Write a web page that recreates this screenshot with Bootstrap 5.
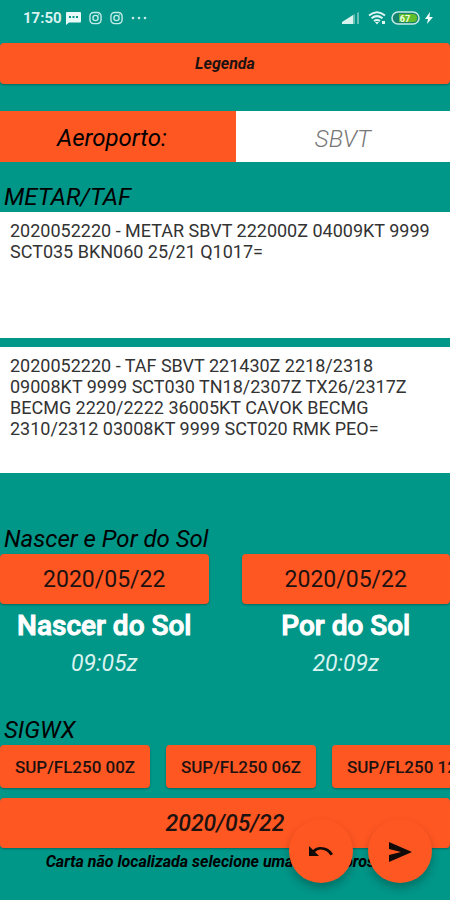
<!DOCTYPE html>
<html lang="pt-BR">
<head>
<meta charset="utf-8">
<meta name="viewport" content="width=device-width, initial-scale=1">
<title>Aeroporto SBVT</title>
<link href="https://cdn.jsdelivr.net/npm/bootstrap@5.3.0/dist/css/bootstrap.min.css" rel="stylesheet">
<style>
  body { font-family: Roboto, "Liberation Sans", sans-serif; background: #009688; color: #000; line-height: 24px; }
  .status-bar { height: 36px; padding-left: 23px; padding-right: 17px; color: #d9f3ef; font-size: 15px; }
  .btn-flame, .btn-flame:hover, .btn-flame:active { background: #ff5722; color: #1d1210; border: 0; border-radius: 4px; box-shadow: 0 1px 2px rgba(0, 0, 0, .3); }
  .legend-btn { height: 41px; margin-top: 7px; margin-bottom: 27px; font-size: 16px; }
  .airport-label { flex: 0 0 52.4%; padding-top: 2px; padding-right: 12px; background: #ff5722; font-size: 24px; }
  .airport-row { height: 51px; }
  .airport-input { padding: 4px 0 0; font-size: 24px; font-weight: 300; color: #777; }
  .section-title { font-size: 24px; line-height: 26px; padding-left: 4px; margin: 0; font-weight: 400; }
  .metar-title { margin-top: 22px; margin-bottom: 2px; }
  .sun-title { margin-top: 53px; margin-bottom: 2px; }
  .sigwx-title { margin-top: 37px; margin-bottom: 2px; }
  .report { display: block; height: 126px; padding: 8px 10px; resize: none; overflow: hidden; font-size: 18px; line-height: 21px; color: #333; font-weight: 400; }
  .report-gap { gap: 9px; }
  .sun-grid { column-gap: 33px; }
  .sun-col { flex: 1 1 0; }
  .date-btn { height: 50px; padding: 3px 0 0; font-size: 23px; }
  .sun-name { font-size: 28px; line-height: 32px; margin: 6px 0; color: #fff; -webkit-text-stroke: 1px #fff; }
  .sun-time { font-size: 23px; line-height: 32px; color: #d9f3ef; }
  .chart-list { gap: 16px; overflow-x: auto; scrollbar-width: none; padding-bottom: 10px; }
  .chart-list::-webkit-scrollbar { display: none; }
  .chart-btn { flex: 0 0 150px; height: 43px; padding: 2px 0 0; font-size: 17px; }
  .fab-group { right: 18px; bottom: 17px; gap: 15px; }
  .fab-btn, .fab-btn:hover { width: 64px; height: 64px; padding: 2px 0 0; border: 0; background: #ff5722; color: #100b09; box-shadow: 0 5px 8px rgba(0, 0, 0, .25); }
  .chart-note { font-size: 16px; line-height: 20px; margin: 4px 0 0; }
</style>
<script src="https://cdn.jsdelivr.net/npm/bootstrap@5.3.0/dist/js/bootstrap.bundle.min.js"></script>
</head>
<body>
<header class="status-bar d-flex align-items-center justify-content-between">
  <div class="d-flex align-items-center">
    <span class="fw-bold me-1">17:50</span>
    <svg width="15" height="13" viewBox="0 0 15 13" aria-hidden="true"><path fill="#e8faf7" d="M1 0h13q1 0 1 1v8.500q0 1-1 1H3L0 13V1q0-1 1-1z"/><path fill="#009688" d="M3 4h2v2H3zM6.500 4h2v2h-2zM10 4h2v2h-2z"/></svg>
    <svg class="ms-2" width="13" height="14" viewBox="0 0 14 14" fill="none" stroke="#c5ece7" stroke-width="1.500" aria-hidden="true"><rect x="1" y="1" width="12" height="12" rx="4"/><circle cx="7" cy="7" r="2.800"/><path d="M10 3.500h1"/></svg>
    <svg class="ms-2" width="13" height="14" viewBox="0 0 14 14" fill="none" stroke="#c5ece7" stroke-width="1.500" aria-hidden="true"><rect x="1" y="1" width="12" height="12" rx="4"/><circle cx="7" cy="7" r="2.800"/><path d="M10 3.500h1"/></svg>
    <svg class="ms-2" width="16" height="4" viewBox="0 0 16 4" fill="#c5ece7" aria-hidden="true"><circle cx="2" cy="2" r="1.300"/><circle cx="8" cy="2" r="1.300"/><circle cx="14" cy="2" r="1.300"/></svg>
  </div>
  <div class="d-flex align-items-center">
    <svg width="18" height="12" viewBox="0 0 18 12" aria-hidden="true"><path fill="#d9f3ef" d="M0 12V10l11-7v9z"/><path fill="#67bfb6" d="M11 12V3l2-1v10zM15 12V1l2-1v12z"/></svg>
    <svg class="ms-2" width="19" height="14" viewBox="0 0 19 14" aria-hidden="true"><g fill="none" stroke="#e0f6f3" stroke-width="2"><path d="M1 4.500Q9 -2 17 4.500M3.500 7.300Q9 3 14.500 7.300M6 10q3-2.200 6 0"/></g><path fill="#e0f6f3" d="M7 11h4l-2 2.500zM14 10h3v3h-3z"/></svg>
    <svg class="ms-1" width="30" height="14" viewBox="0 0 30 14" aria-hidden="true"><rect x="1" y="1" width="27" height="12" rx="6" fill="#16836f" stroke="#c5ece7" stroke-width="1.500"/><path fill="#62bd2c" d="M8 3h14q4 0 4 4t-4 4H8z"/><text x="14" y="10.500" text-anchor="middle" font-size="9" font-weight="700" fill="#f2ffe6">67</text></svg>
    <svg class="ms-1" width="8" height="12" viewBox="0 0 8 12" aria-hidden="true"><path fill="#f2fffd" d="M5 0L0 7h3L2 12 8 5H4.500z"/></svg>
  </div>
</header>

<main>
  <button type="button" class="btn btn-flame legend-btn w-100 fw-bold fst-italic">Legenda</button>

  <div class="airport-row d-flex">
    <label for="airport" class="airport-label d-flex align-items-center justify-content-center fst-italic">Aeroporto:</label>
    <input id="airport" type="text" value="SBVT" class="airport-input form-control flex-fill border-0 rounded-0 text-center fst-italic">
  </div>

  <h2 class="section-title metar-title fst-italic">METAR/TAF</h2>
  <div class="report-gap d-flex flex-column">
    <textarea aria-label="METAR" readonly class="report form-control border-0 rounded-0">2020052220 - METAR SBVT 222000Z 04009KT 9999 SCT035 BKN060 25/21 Q1017=</textarea>
    <textarea aria-label="TAF" readonly class="report form-control border-0 rounded-0">2020052220 - TAF SBVT 221430Z 2218/2318 09008KT 9999 SCT030 TN18/2307Z TX26/2317Z BECMG 2220/2222 36005KT CAVOK BECMG 2310/2312 03008KT 9999 SCT020 RMK PEO=</textarea>
  </div>

  <h2 class="section-title sun-title fst-italic">Nascer e Por do Sol</h2>
  <div class="sun-grid d-flex text-center">
    <section class="sun-col">
      <button type="button" class="btn btn-flame date-btn w-100">2020/05/22</button>
      <h3 class="sun-name">Nascer do Sol</h3>
      <div class="sun-time fst-italic">09:05z</div>
    </section>
    <section class="sun-col">
      <button type="button" class="btn btn-flame date-btn w-100">2020/05/22</button>
      <h3 class="sun-name">Por do Sol</h3>
      <div class="sun-time fst-italic">20:09z</div>
    </section>
  </div>

  <h2 class="section-title sigwx-title fst-italic">SIGWX</h2>
  <div class="chart-list d-flex">
    <button type="button" class="btn btn-flame chart-btn fw-medium">SUP/FL250 00Z</button>
    <button type="button" class="btn btn-flame chart-btn fw-medium">SUP/FL250 06Z</button>
    <button type="button" class="btn btn-flame chart-btn fw-medium">SUP/FL250 12Z</button>
  </div>
  <button type="button" class="btn btn-flame date-btn w-100 fw-medium fst-italic">2020/05/22</button>
  <p class="chart-note text-center fw-bold fst-italic">Carta não localizada selecione uma data e prossiga</p>
</main>

<div class="fab-group position-fixed d-flex">
  <button type="button" aria-label="Voltar" class="btn fab-btn rounded-circle d-flex align-items-center justify-content-center">
    <svg width="24" height="14" viewBox="0 0 24 14" aria-hidden="true"><path fill="currentColor" d="M0 1l4 4Q7 2 11.500 2 20 2 24 9l-2.500 1.500Q18 4.500 11.500 4.500 8 4.500 6 7l4 4H0z"/></svg>
  </button>
  <button type="button" aria-label="Enviar" class="btn fab-btn rounded-circle d-flex align-items-center justify-content-center">
    <svg width="24" height="20" viewBox="0 0 24 20" aria-hidden="true"><path fill="currentColor" d="M1 0l23 10L1 20v-7l12-3L1 7z"/></svg>
  </button>
</div>
</body>
</html>
